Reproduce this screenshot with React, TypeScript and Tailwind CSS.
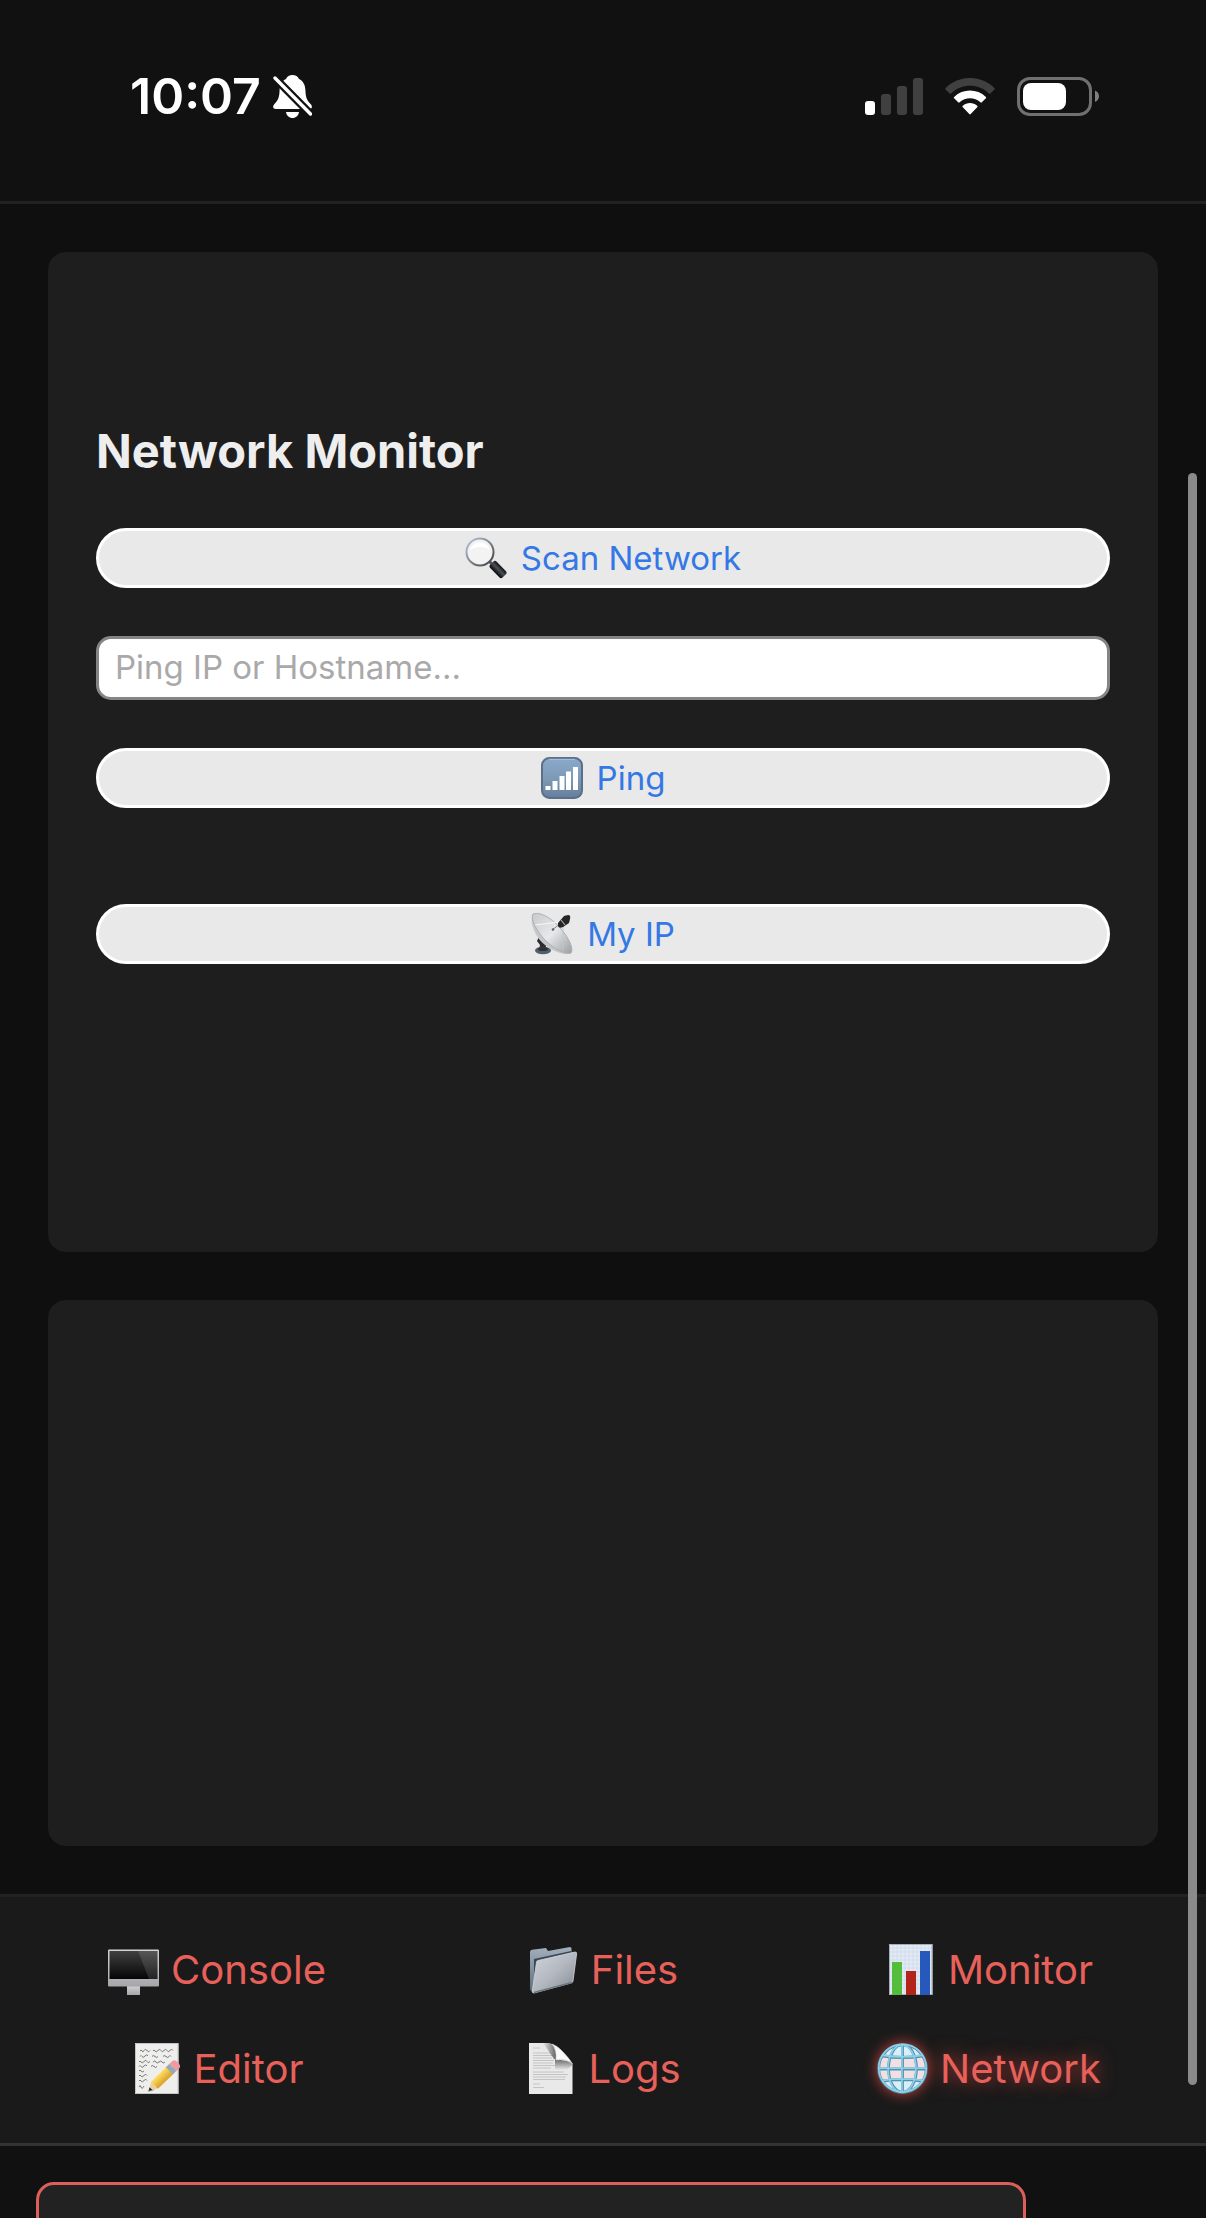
import React from "react";

function MutedBell() {
  return (
    <svg viewBox="0 0 39 43" className="h-[43px] w-[39px]" aria-label="Silent mode">
      <path
        d="M19.500 0c-3 0-5.500 1.500-6.500 4C8.800 6 6.800 10 6.600 15c-.3 7-1 9.500-5.200 14-2.400 2.700-1.200 5 1.600 5h33c2.800 0 4-2.300 1.600-5-4.200-4.500-4.900-7-5.200-14-.2-5-2.200-9-6.400-11-1-2.500-3.500-4-6.500-4Z"
        fill="#fff"
      />
      <path d="M13 37h13c-.5 3.500-3 6-6.500 6S13.500 40.500 13 37Z" fill="#fff" />
      <path d="M2 3 37.500 39" stroke="#111" strokeWidth="8" />
      <path d="M2 3 37.500 39" stroke="#fff" strokeWidth="3.400" strokeLinecap="round" />
    </svg>
  );
}

function CellSignal() {
  return (
    <svg viewBox="0 0 58 37" className="h-[37px] w-[58px]" aria-label="Signal">
      <rect x="0" y="23" width="10" height="14" rx="3" fill="#fff" />
      <rect x="16" y="16" width="10" height="21" rx="3" fill="#404040" />
      <rect x="32" y="8" width="10" height="29" rx="3" fill="#404040" />
      <rect x="48" y="0" width="10" height="37" rx="3" fill="#404040" />
    </svg>
  );
}

function Wifi() {
  return (
    <svg viewBox="0 0 50 37" className="h-[37px] w-[50px]" aria-label="Wi-Fi">
      <path d="M.6 11.500a1 1 0 0 1 0-1.400C14-3.400 36-3.400 49.400 10.100a1 1 0 0 1 0 1.400l-4 4a1 1 0 0 1-1.400 0C33.500 5.200 16.500 5.200 6 15.500a1 1 0 0 1-1.400 0Z" fill="#404040" />
      <path d="M9.100 20.300a1 1 0 0 1 0-1.400c8.900-8.500 22.900-8.500 31.800 0a1 1 0 0 1 0 1.400l-4.100 4a1 1 0 0 1-1.400 0c-5.800-5.400-15-5.400-20.800 0a1 1 0 0 1-1.400 0Z" fill="#fff" />
      <path d="M17.800 29.200a1 1 0 0 1 0-1.500c4.100-3.500 10.300-3.500 14.400 0a1 1 0 0 1 0 1.500l-6.500 6.900a1 1 0 0 1-1.400 0Z" fill="#fff" />
    </svg>
  );
}

function Battery() {
  return (
    <svg viewBox="0 0 82 39" className="h-[39px] w-[82px]" aria-label="Battery">
      <rect x="1.500" y="1.500" width="72" height="36" rx="11.500" fill="none" stroke="#707070" strokeWidth="3" />
      <rect x="6" y="6" width="43" height="27" rx="8" fill="#fff" />
      <path d="M78 13.500c2.500 1 4 3.300 4 5.800s-1.500 4.800-4 5.800Z" fill="#808080" />
    </svg>
  );
}

function Magnifier() {
  return (
    <svg viewBox="0 0 42 42" className="size-[42px]" aria-hidden="true">
      <defs>
        <linearGradient id="lensRim" x1="0" y1="0" x2="1" y2="1">
          <stop offset="0" stopColor="#b4cbe4" />
          <stop offset=".5" stopColor="#80868c" />
          <stop offset="1" stopColor="#3c3c3c" />
        </linearGradient>
        <linearGradient id="lensHandle" x1="0" y1="1" x2="0" y2="0">
          <stop offset="0" stopColor="#050505" />
          <stop offset=".55" stopColor="#4a5058" />
          <stop offset="1" stopColor="#111" />
        </linearGradient>
      </defs>
      <path d="m23 23 5 5" stroke="#555" strokeWidth="3" />
      <rect x="24" y="28" width="18" height="9" rx="2.500" transform="rotate(46 33 32.500)" fill="url(#lensHandle)" />
      <circle cx="15" cy="15" r="13.500" fill="#f3f3f3" stroke="url(#lensRim)" strokeWidth="2" />
      <path d="M5 13a10.500 10.500 0 0 1 20 0c-5-4-14-4-20 0Z" fill="#fff" />
    </svg>
  );
}

function SignalTile() {
  return (
    <svg viewBox="0 0 42 42" className="size-[42px]" aria-hidden="true">
      <defs>
        <linearGradient id="tileFace" x1="0" y1="0" x2="0" y2="1">
          <stop offset="0" stopColor="#8aa9cb" />
          <stop offset=".55" stopColor="#7c98b5" />
          <stop offset="1" stopColor="#647d9a" />
        </linearGradient>
      </defs>
      <rect x="1" y="1" width="40" height="40" rx="7.500" fill="url(#tileFace)" stroke="#5b6f89" strokeWidth="2" />
      <path d="M8 2.300h26" stroke="#a9c2dc" />
      <path d="M4.500 29h5v4h-5zM11.500 24h5v9h-5zM18.500 19h5v14h-5zM25 14.500h5V33h-5zM32 10h5v23h-5z" fill="#fff" />
    </svg>
  );
}

function Dish() {
  return (
    <svg viewBox="0 0 42 42" className="size-[42px]" aria-hidden="true">
      <defs>
        <linearGradient id="dishFace" x1="0" y1="0" x2="1" y2="1">
          <stop offset="0" stopColor="#c9cacb" />
          <stop offset=".5" stopColor="#e6e8ea" />
          <stop offset="1" stopColor="#9b9ea2" />
        </linearGradient>
      </defs>
      <path d="m8 24 8 5-2 8H8l1-5-3-4Z" fill="#2b2b2d" />
      <ellipse cx="12" cy="37.500" rx="8" ry="3.800" fill="#535d68" />
      <ellipse cx="12" cy="36" rx="5" ry="2" fill="#2c3239" />
      <path d="M2 1C-2 9 4 24 14 32c10 8 22 11 26 8 1-3-3-9-5-11Z" fill="#c5c7ca" />
      <path d="M2 1c7-3 20 5 28 15 8 9 13 20 10 24-4 2-16-3-25-12C6 19-1 6 2 1Z" fill="url(#dishFace)" stroke="#adb0b3" />
      <path d="M4 12 29 9" stroke="#f8f8f8" strokeWidth="1" />
      <path d="M32 12v26" stroke="#c4c4c6" strokeWidth="1" />
      <path d="m21 17 8-6" stroke="#888" strokeWidth="1" />
      <circle cx="22" cy="16.500" r="1.300" fill="#666" />
      <path d="m27 10 6-7 4-1q3 0 2 4l-1 4-6 4q-4 2-5-1Z" fill="#252527" />
      <path d="m30 7 4 5" stroke="#aaa" strokeWidth="1.200" />
    </svg>
  );
}

function Desktop() {
  return (
    <svg viewBox="0 0 51 51" className="size-[51px]" aria-hidden="true">
      <defs>
        <linearGradient id="screen" x1="0" y1="0" x2="0" y2="1">
          <stop offset="0" stopColor="#404040" />
          <stop offset="1" stopColor="#050505" />
        </linearGradient>
        <linearGradient id="chin" x1="0" y1="0" x2="0" y2="1">
          <stop offset="0" stopColor="#d5d5d8" />
          <stop offset="1" stopColor="#a5a5aa" />
        </linearGradient>
      </defs>
      <path d="M19 41h13v10H19z" fill="url(#chin)" />
      <rect x="0" y="5.500" width="51" height="37" rx="1" fill="url(#chin)" />
      <path d="M1.500 7h48v28h-48z" fill="url(#screen)" />
      <path d="M30 7h19.500v28H41z" fill="#fff" opacity=".12" />
    </svg>
  );
}

function Folder() {
  return (
    <svg viewBox="0 0 51 51" className="size-[51px]" aria-hidden="true">
      <defs>
        <linearGradient id="folderFront" x1="0" y1="0" x2="1" y2="1">
          <stop offset="0" stopColor="#d0d4da" />
          <stop offset=".5" stopColor="#b4b9c1" />
          <stop offset="1" stopColor="#808791" />
        </linearGradient>
        <linearGradient id="folderBack" x1="0" y1="0" x2="0" y2="1">
          <stop offset="0" stopColor="#a3afbc" />
          <stop offset="1" stopColor="#5f6d7b" />
        </linearGradient>
      </defs>
      <path d="M2 8q0-2 2-2.300L18 4l2 3 22-4 1.500 1v34L5 48q-3-1-3-4Z" fill="url(#folderBack)" />
      <path d="m6 15 37-8v5L9 18 6 44Z" fill="#394755" />
      <path d="M10 16.500 47 8q2 0 1.600 2L45 37q0 1.500-2 2L6 49q-2 0-1.700-2L8.500 18q0-1 1.500-1.500Z" fill="url(#folderFront)" stroke="#d3d7dc" strokeWidth=".8" />
      <path d="M6 48.500 44 38.500" stroke="#697683" strokeWidth="1.500" />
    </svg>
  );
}

function BarChart() {
  return (
    <svg viewBox="0 0 51 51" className="size-[51px]" aria-hidden="true">
      <path d="M4 0h43.500v51H4z" fill="#e2eaf3" />
      <path d="M4 4h43M4 8h43M4 12h43M4 16h43M4 20h43M4 24h43M4 28h43M4 32h43M4 36h43M4 40h43M4 44h43M8 0v51M12 0v51M16 0v51M20 0v51M24 0v51M28 0v51M32 0v51M36 0v51M40 0v51M44 0v51" stroke="#cfdbe9" strokeWidth=".8" />
      <path d="M4.500.5h42.500v50H4.500z" fill="none" stroke="#a7adb6" />
      <path d="M7 18h10v33H7z" fill="#55bd3c" />
      <path d="M21 27h10v24H21z" fill="#b3241b" />
      <path d="M35 7h10v44H35z" fill="#2759bd" />
    </svg>
  );
}

function Memo() {
  return (
    <svg viewBox="0 0 51 51" className="size-[51px]" aria-hidden="true">
      <defs>
        <linearGradient id="pencil" x1="0" y1="0" x2="0" y2="1">
          <stop offset="0" stopColor="#ffe064" />
          <stop offset="1" stopColor="#d99f26" />
        </linearGradient>
      </defs>
      <path d="M4 0h43.500v51H4z" fill="#eeeeec" />
      <path d="M4.500.5h42.500v50H4.500z" fill="none" stroke="#c4c4c2" />
      <path
        d="M9 8q1-2 2 0t2-.5 3 0 3 0M22 8q1-2 2 0t3-.5 3 0 3 0 3 0 3 0 3 0M9 13.500q1-2 2 0t3-.5 3 0M21 13.500q1-2 3 0t3 0M32 13.500q1-2 3 0t3 0 2 0M8 19q1-2 2 0t3-.5 3 0 3 0M22 19q2-2 3 0t3 0 3 0 3 0M8 23.500q1-2 2 0t3-.5 3 0M20 23.500q1-2 3 0t3 0M8 28q1-2 2 0t3 0M8 33q1-2 2 0t3-.5 3 0M8 38q1-2 2 0t3-.5 3 0M8 44q1-3 2 0t3-1"
        fill="none"
        stroke="#777"
        strokeWidth="1"
      />
      <path d="m16 49 6-1 26-25-2-2Z" fill="#000" opacity=".25" />
      <g transform="translate(17.500 48) rotate(-44)">
        <path d="M0 0 9-5v10Z" fill="#ead0a0" />
        <path d="M0 0l3.500-2v4Z" fill="#222" />
        <path d="M9-5h21V5H9q-2-2 0-3.300-2-1.700 0-3.400-2-1.600 0-3.300Z" fill="url(#pencil)" />
        <path d="M29-5h5V5h-5z" fill="#97a8b4" />
        <path d="M34-5h4q3 0 3 5t-3 5h-4z" fill="#ee9aa0" />
      </g>
    </svg>
  );
}

function Page() {
  return (
    <svg viewBox="0 0 51 51" className="size-[51px]" aria-hidden="true">
      <defs>
        <linearGradient id="curlShade" x1="0" y1="0" x2="1" y2="0">
          <stop offset="0" stopColor="#444" stopOpacity="0" />
          <stop offset="1" stopColor="#444" stopOpacity=".8" />
        </linearGradient>
        <linearGradient id="curlFall" x1="0" y1="0" x2="0" y2="1">
          <stop offset="0" stopColor="#444" stopOpacity=".8" />
          <stop offset="1" stopColor="#444" stopOpacity="0" />
        </linearGradient>
      </defs>
      <path d="M4 0h20q7 2 12 7 8 8 11.500 14v30H4z" fill="#e9e9e9" />
      <path d="M8 5h7M8 10h18M8 12.500h20M8 15h19M8 17.500h21M8 20h20M8 22.500h22M8 25h18M8 29h31M8 31.500h35M8 34h33M8 36.500h32M8 41h7M8 44.500h11" stroke="#c0c0c0" strokeWidth=".9" />
      <path d="M18 0h6l7 4v12H29Z" fill="url(#curlShade)" />
      <path d="M30 16l17.500 3v3L42 27H30Z" fill="url(#curlFall)" />
      <path d="M27 1q5 6 4 16 10-2 16.500 4Q44 15 36 7 32 3 27 1Z" fill="#fafafa" stroke="#c8c8c8" strokeWidth=".6" />
    </svg>
  );
}

function Globe() {
  return (
    <svg
      viewBox="0 0 51 51"
      className="size-[51px] overflow-visible drop-shadow-[0_0_7px_#c8453f]"
      aria-hidden="true"
    >
      <circle cx="25.500" cy="25.500" r="24" fill="#f1dfe2" />
      <path d="M8 9q17-14 35 0l-4 5H12ZM8 42q17 14 35 0l-4-4H12Z" fill="#d9eef6" />
      <g fill="none" stroke="#4d91b3" strokeWidth="2.800">
        <circle cx="25.500" cy="25.500" r="23.800" />
        <ellipse cx="25.500" cy="25.500" rx="14" ry="23.800" />
        <path d="M25.500 2v47M2 26h47M6 13q19 3 39 0M6 38q19-3 39 0" />
      </g>
      <g fill="none" stroke="#8dd1e8" strokeWidth="1.600">
        <circle cx="25.500" cy="25" r="23.800" />
        <ellipse cx="25" cy="25.500" rx="14" ry="23.800" />
        <path d="M25 2v47M2 25.300h47M6 12.400q19 3 39 0M6 37.400q19-3 39 0" />
      </g>
    </svg>
  );
}

function ActionButton({ icon, label }: { icon: React.ReactNode; label: string }) {
  return (
    <button
      type="button"
      className="flex h-[60px] w-full items-center justify-center gap-3.5 rounded-full border-3 border-white bg-[#e9e9e9] text-[33px] leading-10 text-[#3478e5]"
    >
      {icon}
      <span>{label}</span>
    </button>
  );
}

const tabs = [
  { label: "Console", icon: <Desktop /> },
  { label: "Files", icon: <Folder /> },
  { label: "Monitor", icon: <BarChart /> },
  { label: "Editor", icon: <Memo /> },
  { label: "Logs", icon: <Page /> },
  { label: "Network", icon: <Globe />, active: true },
];

export default function App() {
  return (
    <div className="relative flex h-screen flex-col overflow-hidden bg-[#0f0f0f] font-['Inter',sans-serif] text-[#eee]">
      <header className="flex h-[204px] shrink-0 items-start justify-between border-b-3 border-[#222] bg-[#111] pt-[66px] pr-[107px] pl-[130px]">
        <div className="flex h-[60px] items-center gap-3">
          <span className="text-[50px] leading-[60px] font-semibold text-white">10:07</span>
          <MutedBell />
        </div>
        <div className="flex h-[60px] items-center gap-[22px]">
          <CellSignal />
          <Wifi />
          <Battery />
        </div>
      </header>

      <main className="flex shrink-0 flex-col gap-12 p-12">
        <section className="min-h-[1000px] rounded-[18px] bg-[#1e1e1e] px-12 pt-[170px] pb-12">
          <h1 className="text-[47px] leading-[58px] font-bold">Network Monitor</h1>
          <div className="mt-12 flex flex-col gap-12">
            <ActionButton icon={<Magnifier />} label="Scan Network" />
            <input
              type="text"
              aria-label="Ping IP or Hostname"
              placeholder="Ping IP or Hostname..."
              className="h-16 w-full rounded-[15px] border-3 border-[#858585] bg-white px-4 pb-0.5 text-[33px] leading-10 text-black placeholder:text-[#a9a9a9]"
            />
            <ActionButton icon={<SignalTile />} label="Ping" />
          </div>
          <div className="mt-24">
            <ActionButton icon={<Dish />} label="My IP" />
          </div>
        </section>
        <section className="h-[546px] rounded-[18px] bg-[#1e1e1e]" aria-label="Results" />
      </main>

      <nav className="grid shrink-0 grid-cols-3 gap-y-12 border-t-3 border-[#222] bg-[#1a1a1a] px-6 pt-[47px] pb-[49px]">
        {tabs.map((tab) => (
          <a
            key={tab.label}
            href={`#${tab.label.toLowerCase()}`}
            aria-current={tab.active ? "page" : undefined}
            className={`flex h-[51px] items-center justify-center gap-3 text-[40px] leading-[51px] text-[#e8605a] ${
              tab.active ? "[text-shadow:0_0_18px_#b03c37]" : ""
            }`}
          >
            {tab.icon}
            <span>{tab.label}</span>
          </a>
        ))}
      </nav>

      <form className="shrink-0 border-t-3 border-[#333] bg-[#111] pt-9 pr-[180px] pl-9">
        <input
          type="text"
          aria-label="Command"
          className="block h-28 w-full rounded-[18px] border-3 border-[#dd5f5a] bg-[#222] px-7 text-[40px] text-[#eee]"
        />
      </form>

      <div className="absolute top-[473px] right-[9px] h-[1612px] w-[9px] rounded-full bg-[#8a8a8a]" aria-hidden="true" />
    </div>
  );
}
